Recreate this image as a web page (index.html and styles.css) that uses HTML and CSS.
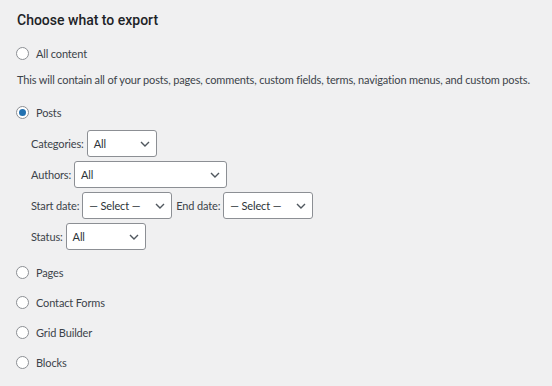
FILE: index.html
```html
<!DOCTYPE html>
<html>
<head>
<meta charset="utf-8">
<link rel="stylesheet" href="styles.css">
</head>
<body>
<div class="wrap">
  <h2 class="title">Choose what to export</h2>
  <div class="radio-row first"><span class="radio"></span><span>All content</span></div>
  <p class="desc">This will contain all of your posts, pages, comments, custom fields, terms, navigation menus, and custom posts.</p>
  <div class="radio-row posts"><span class="radio checked"></span><span>Posts</span></div>
  <div class="filters">
    <div class="frow"><span class="lbl">Categories:</span><div class="sel w-cat"><span>All</span><svg class="chev" width="10" height="6" viewBox="0 0 10 6"><path d="M1 1l4 4 4-4" fill="none" stroke="#50575e" stroke-width="1.4"/></svg></div></div>
    <div class="frow"><span class="lbl">Authors:</span><div class="sel w-auth"><span>All</span><svg class="chev" width="10" height="6" viewBox="0 0 10 6"><path d="M1 1l4 4 4-4" fill="none" stroke="#50575e" stroke-width="1.4"/></svg></div></div>
    <div class="frow"><span class="lbl">Start date:</span><div class="sel w-date"><span>— Select —</span><svg class="chev" width="10" height="6" viewBox="0 0 10 6"><path d="M1 1l4 4 4-4" fill="none" stroke="#50575e" stroke-width="1.4"/></svg></div><span class="lbl lbl2">End date:</span><div class="sel w-date"><span>— Select —</span><svg class="chev" width="10" height="6" viewBox="0 0 10 6"><path d="M1 1l4 4 4-4" fill="none" stroke="#50575e" stroke-width="1.4"/></svg></div></div>
    <div class="frow"><span class="lbl">Status:</span><div class="sel w-stat"><span>All</span><svg class="chev" width="10" height="6" viewBox="0 0 10 6"><path d="M1 1l4 4 4-4" fill="none" stroke="#50575e" stroke-width="1.4"/></svg></div></div>
  </div>
  <div class="others">
    <div class="radio-row"><span class="radio"></span><span>Pages</span></div>
    <div class="radio-row"><span class="radio"></span><span>Contact Forms</span></div>
    <div class="radio-row"><span class="radio"></span><span>Grid Builder</span></div>
    <div class="radio-row"><span class="radio"></span><span>Blocks</span></div>
  </div>
</div>
</body>
</html>
```
FILE: styles.css
```css
html, body {
  margin: 0;
  padding: 0;
  background: #f0f0f1;
}
body {
  font-family: Lato, "Open Sans", sans-serif;
  font-size: 11px;
  letter-spacing: -0.15px;
  color: #3c434a;
  overflow: hidden;
  height: 386px;
}
.wrap {
  padding: 8px 0 0 17px;
}
.title {
  margin: 0;
  font-family: Roboto, Lato, sans-serif;
  font-size: 14px;
  font-weight: 500;
  letter-spacing: 0;
  color: #1d2327;
  line-height: 24px;
}
.radio-row {
  display: flex;
  align-items: center;
  gap: 7px;
  height: 30px;
  margin-left: -1px;
  white-space: nowrap;
}
.radio-row.first {
  margin-top: 6px;
}
.radio-row.posts {
  margin-top: 5px;
}
.radio {
  width: 11px;
  height: 11px;
  border: 1px solid #8c8f94;
  border-radius: 50%;
  background: #fff;
  display: flex;
  align-items: center;
  justify-content: center;
  flex: none;
}
.radio.checked::before {
  content: "";
  width: 7px;
  height: 7px;
  border-radius: 50%;
  background: #2271b1;
}
.desc {
  margin: 0;
  line-height: 24px;
  height: 24px;
  white-space: nowrap;
}
.filters {
  display: flex;
  flex-direction: column;
  gap: 4px;
  padding: 3px 0 0 14px;
}
.frow {
  display: flex;
  align-items: center;
  gap: 3px;
  white-space: nowrap;
}
.lbl2 {
  margin-left: 1px;
}
.sel {
  box-sizing: border-box;
  height: 27px;
  border: 1px solid #8c8f94;
  border-radius: 3px;
  background: #fff;
  display: flex;
  align-items: center;
  justify-content: space-between;
  padding: 0 6px 0 6px;
  color: #2c3338;
}
.w-cat { width: 70px; }
.w-auth { width: 153px; }
.w-date { width: 90px; }
.w-stat { width: 80px; }
.chev { flex: none; }
.others {
  margin-top: 7px;
}
```
